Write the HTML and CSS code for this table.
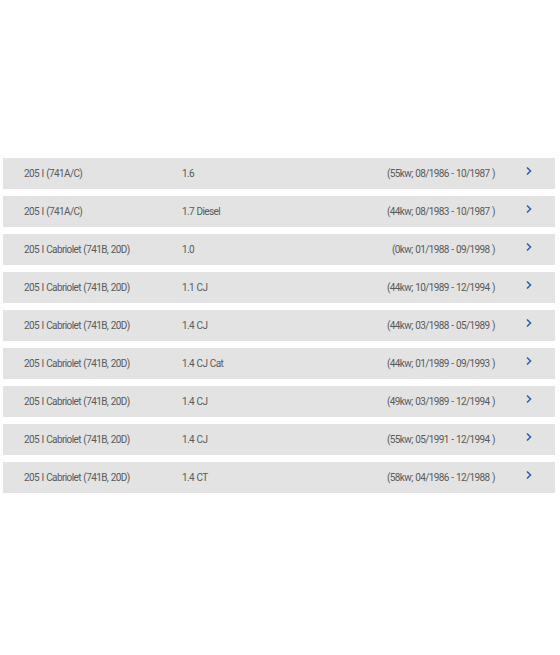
FILE: index.html
```html
<!DOCTYPE html>
<html>
<head>
<meta charset="utf-8">
<link rel="stylesheet" href="styles.css">
</head>
<body>
<div class="list">
  <div class="row"><span class="model">205 I (741A/C)</span><span class="engine">1.6</span><span class="info">(55kw; 08/1986 - 10/1987 )</span><span class="chev"><svg width="8" height="10" viewBox="0 0 8 10"><path d="M2 1.5 L5.5 5 L2 8.5" fill="none" stroke="#2f63a8" stroke-width="1.6"/></svg></span></div>
  <div class="row"><span class="model">205 I (741A/C)</span><span class="engine">1.7 Diesel</span><span class="info">(44kw; 08/1983 - 10/1987 )</span><span class="chev"><svg width="8" height="10" viewBox="0 0 8 10"><path d="M2 1.5 L5.5 5 L2 8.5" fill="none" stroke="#2f63a8" stroke-width="1.6"/></svg></span></div>
  <div class="row"><span class="model">205 I Cabriolet (741B, 20D)</span><span class="engine">1.0</span><span class="info">(0kw; 01/1988 - 09/1998 )</span><span class="chev"><svg width="8" height="10" viewBox="0 0 8 10"><path d="M2 1.5 L5.5 5 L2 8.5" fill="none" stroke="#2f63a8" stroke-width="1.6"/></svg></span></div>
  <div class="row"><span class="model">205 I Cabriolet (741B, 20D)</span><span class="engine">1.1 CJ</span><span class="info">(44kw; 10/1989 - 12/1994 )</span><span class="chev"><svg width="8" height="10" viewBox="0 0 8 10"><path d="M2 1.5 L5.5 5 L2 8.5" fill="none" stroke="#2f63a8" stroke-width="1.6"/></svg></span></div>
  <div class="row"><span class="model">205 I Cabriolet (741B, 20D)</span><span class="engine">1.4 CJ</span><span class="info">(44kw; 03/1988 - 05/1989 )</span><span class="chev"><svg width="8" height="10" viewBox="0 0 8 10"><path d="M2 1.5 L5.5 5 L2 8.5" fill="none" stroke="#2f63a8" stroke-width="1.6"/></svg></span></div>
  <div class="row"><span class="model">205 I Cabriolet (741B, 20D)</span><span class="engine">1.4 CJ Cat</span><span class="info">(44kw; 01/1989 - 09/1993 )</span><span class="chev"><svg width="8" height="10" viewBox="0 0 8 10"><path d="M2 1.5 L5.5 5 L2 8.5" fill="none" stroke="#2f63a8" stroke-width="1.6"/></svg></span></div>
  <div class="row"><span class="model">205 I Cabriolet (741B, 20D)</span><span class="engine">1.4 CJ</span><span class="info">(49kw; 03/1989 - 12/1994 )</span><span class="chev"><svg width="8" height="10" viewBox="0 0 8 10"><path d="M2 1.5 L5.5 5 L2 8.5" fill="none" stroke="#2f63a8" stroke-width="1.6"/></svg></span></div>
  <div class="row"><span class="model">205 I Cabriolet (741B, 20D)</span><span class="engine">1.4 CJ</span><span class="info">(55kw; 05/1991 - 12/1994 )</span><span class="chev"><svg width="8" height="10" viewBox="0 0 8 10"><path d="M2 1.5 L5.5 5 L2 8.5" fill="none" stroke="#2f63a8" stroke-width="1.6"/></svg></span></div>
  <div class="row"><span class="model">205 I Cabriolet (741B, 20D)</span><span class="engine">1.4 CT</span><span class="info">(58kw; 04/1986 - 12/1988 )</span><span class="chev"><svg width="8" height="10" viewBox="0 0 8 10"><path d="M2 1.5 L5.5 5 L2 8.5" fill="none" stroke="#2f63a8" stroke-width="1.6"/></svg></span></div>
</div>
</body>
</html>
```
FILE: styles.css
```css
html, body {
  margin: 0;
  padding: 0;
  background: #fff;
}
body {
  font-family: "Roboto", sans-serif;
  font-size: 10px;
  letter-spacing: -0.6px;
  word-spacing: 0.6px;
  color: #5a5a5a;
}
.list {
  padding: 158px 5px 0 3px;
  display: flex;
  flex-direction: column;
  gap: 7px;
}
.row {
  display: flex;
  align-items: center;
  height: 31px;
  background: #e3e3e3;
  padding-left: 21px;
}
.model {
  width: 158px;
  flex: none;
}
.engine {
  width: 120px;
  flex: none;
}
.info {
  flex: none;
  width: 193px;
  text-align: right;
}
.chev {
  margin-left: 30px;
  display: flex;
  margin-top: -6px;
}
```
